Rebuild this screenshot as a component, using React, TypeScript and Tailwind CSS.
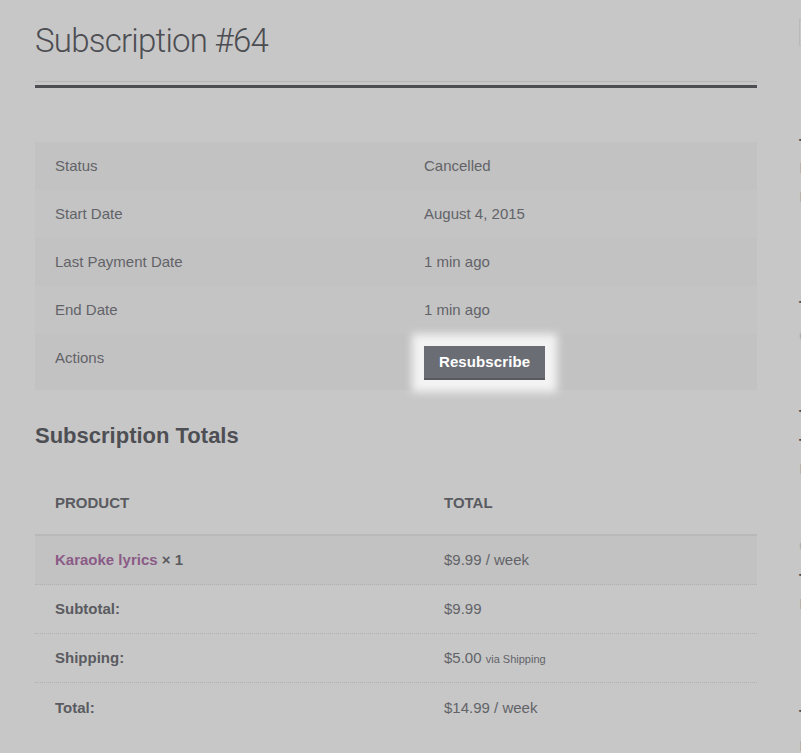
import React from "react";

export default function App() {
  return (
    <div className="w-[801px] h-[753px] overflow-hidden bg-[#c7c7c7] flex font-['Liberation_Sans',Arial,sans-serif] text-[15px] text-[#626368]">
      <div className="ml-[35px] w-[722px] shrink-0">
        <div className="border-b border-[#b5b5b5] pb-[20px]">
          <h1 className="pt-[21px] text-[33px] leading-[40px] font-light font-['Roboto','Liberation_Sans',sans-serif] text-[#4c4d52] tracking-[-0.75px]">
            Subscription #64
          </h1>
        </div>
        <div className="mt-[3px] h-[3px] bg-[#4d4e52]" />

        <div className="mt-[54px] flex flex-col">
          <div className="flex h-[48px] items-center bg-[#c2c2c2] leading-[24px]">
            <div className="w-[369px] pl-[20px]">Status</div>
            <div className="pl-[20px]">Cancelled</div>
          </div>
          <div className="flex h-[48px] items-center bg-[#c4c4c4] leading-[24px]">
            <div className="w-[369px] pl-[20px]">Start Date</div>
            <div className="pl-[20px]">August 4, 2015</div>
          </div>
          <div className="flex h-[48px] items-center bg-[#c2c2c2] leading-[24px]">
            <div className="w-[369px] pl-[20px]">Last Payment Date</div>
            <div className="pl-[20px]">1 min ago</div>
          </div>
          <div className="flex h-[48px] items-center bg-[#c4c4c4] leading-[24px]">
            <div className="w-[369px] pl-[20px]">End Date</div>
            <div className="pl-[20px]">1 min ago</div>
          </div>
          <div className="flex h-[56px] items-start pt-[12px] bg-[#c2c2c2] leading-[24px]">
            <div className="w-[369px] pl-[20px]">Actions</div>
            <div className="pl-[20px]">
              <button className="h-[34px] px-[15px] bg-[#6a6d74] border-b-2 border-[#585a60] text-white font-bold text-[15px] leading-[32px] tracking-[0.1px] shadow-[0_0_8px_12px_#f3f3f3]">
                Resubscribe
              </button>
            </div>
          </div>
        </div>

        <h2 className="mt-[32px] text-[22px] leading-[28px] font-bold text-[#4e4f54]">
          Subscription Totals
        </h2>

        <div className="flex flex-col">
          <div className="flex pt-[41px] pb-[19px] leading-[24px] font-bold uppercase text-[#5a5b60] border-b-2 border-[#b9b9b9]">
            <div className="w-[389px] pl-[20px]">Product</div>
            <div className="pl-[20px]">Total</div>
          </div>
          <div className="flex h-[49px] items-center bg-[#c2c2c2] border-b border-dotted border-[#b0b0b0] leading-[24px]">
            <div className="w-[389px] pl-[20px]">
              <span className="font-bold text-[#8b5b87]">Karaoke lyrics</span>{" "}
              <span className="font-bold text-[#5a5b60]">× 1</span>
            </div>
            <div className="pl-[20px]">$9.99 / week</div>
          </div>
          <div className="flex h-[49px] items-center border-b border-dotted border-[#b0b0b0] leading-[24px]">
            <div className="w-[389px] pl-[20px] font-bold text-[#5a5b60]">Subtotal:</div>
            <div className="pl-[20px]">$9.99</div>
          </div>
          <div className="flex h-[49px] items-center border-b border-dotted border-[#b0b0b0] leading-[24px]">
            <div className="w-[389px] pl-[20px] font-bold text-[#5a5b60]">Shipping:</div>
            <div className="pl-[20px]">
              $5.00 <span className="text-[11px]">via Shipping</span>
            </div>
          </div>
          <div className="flex h-[49px] items-center leading-[24px]">
            <div className="w-[389px] pl-[20px] font-bold text-[#5a5b60]">Total:</div>
            <div className="pl-[20px]">$14.99 / week</div>
          </div>
        </div>
      </div>

      <div className="ml-[42px] w-[240px] shrink-0 flex flex-col text-[15px] leading-none">
        <div className="mt-[19px] h-[32px] border border-[#b9b9b9]" />
        <div className="mt-[90px] h-[15px] font-bold text-[#4a4a4e] whitespace-nowrap">Top Posts</div>
        <div className="mt-[9px] h-[15px] text-[#ababab] whitespace-nowrap">Latest News</div>
        <div className="mt-[14px] h-[15px] text-[#ababab] whitespace-nowrap">Lyrics Archive</div>
        <div className="mt-[94px] h-[15px] font-bold text-[#4a4a4e] whitespace-nowrap">Tags</div>
        <div className="mt-[15px] h-[15px] text-[#ababab] whitespace-nowrap">Open Music</div>
        <div className="mt-[64px] h-[15px] font-bold text-[#4a4a4e] whitespace-nowrap">Trending</div>
        <div className="mt-[14px] h-[15px] font-bold text-[#4a4a4e] whitespace-nowrap">Today</div>
        <div className="mt-[10px] h-[15px] text-[#ababab] whitespace-nowrap">Links</div>
        <div className="mt-[62px] h-[15px] text-[#ababab] whitespace-nowrap">Other</div>
        <div className="mt-[18px] h-[15px] font-bold text-[#4a4a4e] whitespace-nowrap">Topics</div>
        <div className="mt-[10px] h-[15px] text-[#ababab] whitespace-nowrap">Lists</div>
        <div className="mt-[96px] h-[15px] font-bold text-[#4a4a4e] whitespace-nowrap">Tools</div>
        <div className="mt-[16px] h-[15px] text-[#ababab] whitespace-nowrap">Logs</div>
      </div>
    </div>
  );
}
